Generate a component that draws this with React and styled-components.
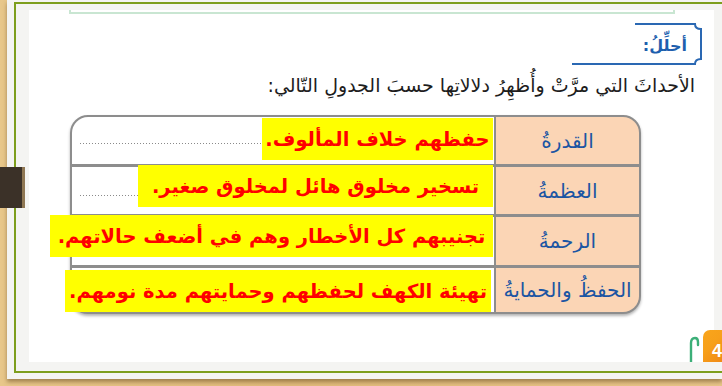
import React from "react";
import styled, { createGlobalStyle } from "styled-components";

const Global = createGlobalStyle`
  html, body {
    margin: 0;
    padding: 0;
  }
  body {
    width: 722px;
    height: 386px;
    overflow: hidden;
    background: linear-gradient(90deg, #e8c78a 0%, #e1bb7b 40%, #e9c68a 100%);
    font-family: "DejaVu Sans", "Noto Sans", sans-serif;
  }
`;

const Frame = styled.div`
  position: relative;
  margin-left: 7px;
  height: 379px;
  box-sizing: border-box;
  padding: 2px 0 0 7px;
  background: #f4f4f2;
  box-shadow: 0 3px 4px rgba(95, 65, 25, 0.5);
`;

const GreenBorder = styled.div`
  box-sizing: border-box;
  height: 371px;
  border: 2px solid #7d9e1d;
  border-right: none;
  padding: 6px 8px 9px 13px;
`;

const Page = styled.div`
  position: relative;
  height: 352px;
  background: #fff;
`;

const TopRule = styled.div`
  margin-left: 40px;
  width: 606px;
  height: 4px;
  box-sizing: border-box;
  border: 2px solid #c9e6d2;
  border-top: none;
`;

const TitleRow = styled.div`
  display: flex;
  justify-content: flex-end;
  margin-top: 9px;
  padding-right: 11px;
`;

const TitleWrap = styled.div`
  position: relative;
  width: 131px;
  height: 42px;
  display: flex;
  align-items: center;
  justify-content: flex-end;
  padding-right: 16px;
  box-sizing: border-box;
`;

const TitleFrame = styled.svg`
  position: absolute;
  inset: 0;
`;

const Title = styled.span`
  position: relative;
  direction: rtl;
  color: #1e5fae;
  font-size: 16px;
  font-weight: bold;
  line-height: 1;
  margin-top: 4px;
`;

const Instruction = styled.p`
  margin: 3px 0 0;
  height: 34px;
  line-height: 34px;
  padding-right: 19px;
  text-align: right;
  direction: rtl;
  font-size: 19px;
  color: #1d1d1d;
`;

const Table = styled.div`
  margin: 13px 0 0 41px;
  width: 571px;
  box-sizing: border-box;
  display: grid;
  grid-template-columns: minmax(0, 1fr) 143px;
  grid-template-rows: 47px 47px 48px 44px;
  column-gap: 2px;
  row-gap: 3px;
  border: 2px solid #8d8d8d;
  border-radius: 18px;
  background: #8d8d8d;
  box-shadow: 0 2px 3px rgba(0, 0, 0, 0.3);
`;

const AnswerCell = styled.div`
  display: flex;
  justify-content: flex-end;
  align-items: flex-start;
  background-color: #fff;
  background-image: ${(p) =>
    p.$dot ? "repeating-linear-gradient(90deg, #8a8a8a 0 1px, transparent 1px 3px)" : "none"};
  background-size: 100% 1px;
  background-repeat: no-repeat;
  background-position: 8px ${(p) => p.$dot || 0}px;
  border-radius: ${(p) => p.$radius || "0"};
`;

const Highlight = styled.div`
  flex-shrink: 0;
  width: ${(p) => p.$w}px;
  height: 42px;
  margin-top: ${(p) => p.$top}px;
  margin-right: ${(p) => p.$right}px;
  background: #ffff00;
  color: #ff0000;
  font-weight: bold;
  font-size: 19.5px;
  direction: rtl;
  white-space: nowrap;
  display: flex;
  align-items: center;
  justify-content: center;
`;

const LabelCell = styled.div`
  display: flex;
  align-items: center;
  justify-content: center;
  background: #fbd5b5;
  color: #1b55a3;
  font-size: 20px;
  direction: rtl;
  border-radius: ${(p) => p.$radius || "0"};
`;

const Bookmark = styled.div`
  position: absolute;
  left: -7px;
  top: 167px;
  width: 22px;
  height: 41px;
  background: #3b3128;
  border-right: 3px solid #8f7753;
`;

const PageMark = styled.div`
  position: absolute;
  right: -8px;
  bottom: 0;
  display: flex;
  align-items: flex-end;
  gap: 3px;
`;

const Orange = styled.div`
  width: 19px;
  height: 32px;
  border-radius: 7px 0 0 0;
  background: linear-gradient(135deg, #f9a51c 0%, #f7a01a 45%, #f08a16 100%);
  color: #fff;
  font-family: "Liberation Sans", sans-serif;
  font-weight: bold;
  font-size: 18px;
  line-height: 1;
  padding: 12px 0 0 9px;
  box-sizing: border-box;
  overflow: hidden;
`;

const rows = [
  { label: "القدرةُ", text: "حفظهم خلاف المألوف.", w: 231, top: 1, right: 1, dot: 26 },
  { label: "العظمةُ", text: "تسخير مخلوق هائل لمخلوق صغير.", w: 355, top: -2, right: 1, dot: 28 },
  { label: "الرحمةُ", text: "تجنيبهم كل الأخطار وهم في أضعف حالاتهم.", w: 443, top: -2, right: 1 },
  { label: "الحفظُ والحمايةُ", text: "تهيئة الكهف لحفظهم وحمايتهم مدة نومهم.", w: 426, top: 2, right: 3 },
];

export default function App() {
  return (
    <>
      <Global />
      <Frame>
        <Bookmark />
        <GreenBorder>
          <Page>
            <TopRule />
            <TitleRow>
              <TitleWrap>
                <TitleFrame width="131" height="42" viewBox="0 0 131 42">
                  <path
                    d="M63 1 H123 Q123 6 129 6 V36 Q123 36 123 41 H0"
                    fill="none"
                    stroke="#2a68b3"
                    strokeWidth="2"
                  />
                </TitleFrame>
                <Title>أحلِّلُ:</Title>
              </TitleWrap>
            </TitleRow>
            <Instruction>الأحداثَ التي مرَّتْ وأُظهِرُ دلالاتِها حسبَ الجدولِ التّالي:</Instruction>
            <Table>
              {rows.map((r, i) => {
                const first = i === 0;
                const last = i === rows.length - 1;
                return (
                  <React.Fragment key={r.label}>
                    <AnswerCell
                      $dot={r.dot}
                      $radius={first ? "16px 0 0 0" : last ? "0 0 0 16px" : "0"}
                    >
                      <Highlight $w={r.w} $top={r.top} $right={r.right}>
                        {r.text}
                      </Highlight>
                    </AnswerCell>
                    <LabelCell $radius={first ? "0 16px 0 0" : last ? "0 0 16px 0" : "0"}>
                      {r.label}
                    </LabelCell>
                  </React.Fragment>
                );
              })}
            </Table>
            <PageMark>
              <svg width="12" height="26" viewBox="0 0 12 26">
                <path
                  d="M3 26 V7 Q3 2 7 2 Q10 2 10 6 V9"
                  fill="none"
                  stroke="#3caf78"
                  strokeWidth="2.4"
                  strokeLinecap="round"
                />
              </svg>
              <Orange>4</Orange>
            </PageMark>
          </Page>
        </GreenBorder>
      </Frame>
    </>
  );
}
